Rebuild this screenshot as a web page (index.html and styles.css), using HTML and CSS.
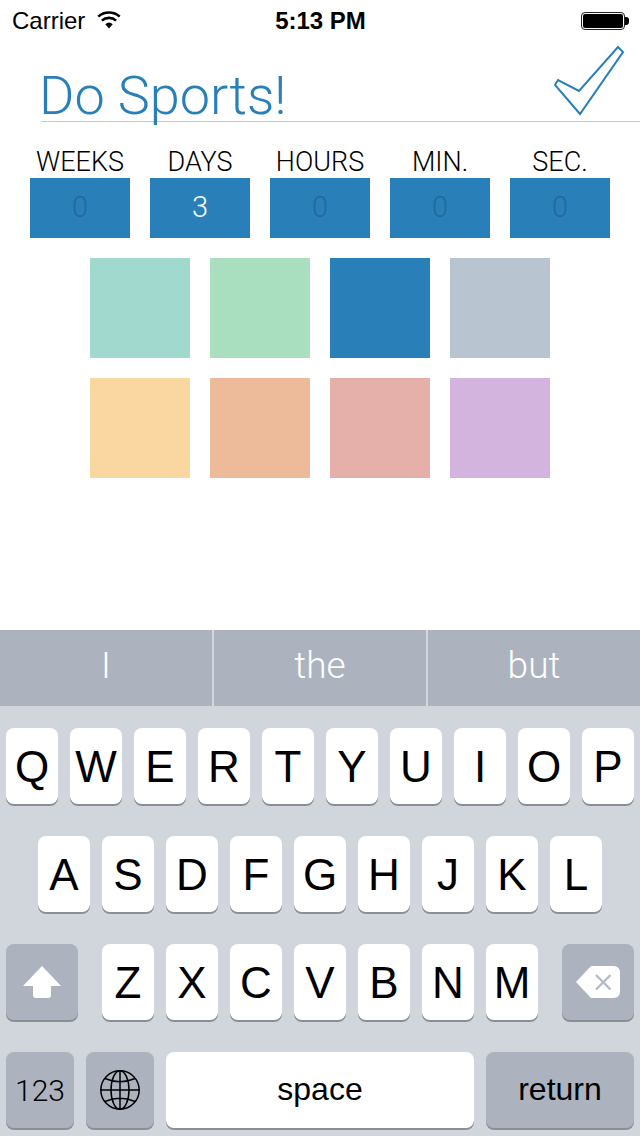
FILE: index.html
```html
<!DOCTYPE html>
<html lang="en">
<head>
<meta charset="utf-8">
<title>Do Sports!</title>
<link rel="stylesheet" href="styles.css">
</head>
<body>
<div class="screen">
  <div class="status">
    <div class="status-left">
      <span>Carrier</span>
      <svg class="wifi" width="26" height="20" viewBox="0 0 26 20"><path d="M13 17.500 9.300 13.200a5.600 5.600 0 0 1 7.400 0Z" fill="#000"/><path d="M5.900 9.600a10.600 10.600 0 0 1 14.200 0M2.300 5.600a16 16 0 0 1 21.400 0" fill="none" stroke="#000" stroke-width="2.600"/></svg>
    </div>
    <div class="status-time">5:13 PM</div>
    <div class="status-right">
      <span class="battery"><span class="battery-fill"></span></span><span class="battery-tip"></span>
    </div>
  </div>
  <div class="header">
    <div class="title">Do Sports!</div>
    <svg class="check" width="72" height="72" viewBox="0 0 72 72"><path d="M1 40 4 35 25 46 64 2 69 7 26 69Z" fill="none" stroke="#2980b9" stroke-width="2"/></svg>
  </div>
  <div class="units">
    <div class="unit"><div class="unit-label">WEEKS</div><div class="unit-box zero">0</div></div>
    <div class="unit"><div class="unit-label">DAYS</div><div class="unit-box">3</div></div>
    <div class="unit"><div class="unit-label">HOURS</div><div class="unit-box zero">0</div></div>
    <div class="unit"><div class="unit-label">MIN.</div><div class="unit-box zero">0</div></div>
    <div class="unit"><div class="unit-label">SEC.</div><div class="unit-box zero">0</div></div>
  </div>
  <div class="swatches">
    <div class="swatch c1"></div><div class="swatch c2"></div><div class="swatch c3"></div><div class="swatch c4"></div>
    <div class="swatch c5"></div><div class="swatch c6"></div><div class="swatch c7"></div><div class="swatch c8"></div>
  </div>
  <div class="keyboard">
    <div class="suggest">
      <div class="sug">I</div><div class="sug">the</div><div class="sug">but</div>
    </div>
    <div class="keys">
      <div class="row">
        <div class="key">Q</div><div class="key">W</div><div class="key">E</div><div class="key">R</div><div class="key">T</div><div class="key">Y</div><div class="key">U</div><div class="key">I</div><div class="key">O</div><div class="key">P</div>
      </div>
      <div class="row">
        <div class="key">A</div><div class="key">S</div><div class="key">D</div><div class="key">F</div><div class="key">G</div><div class="key">H</div><div class="key">J</div><div class="key">K</div><div class="key">L</div>
      </div>
      <div class="row row3">
        <div class="key fn wide">
          <svg width="38" height="32" viewBox="0 0 38 32"><path d="M19 0 38 20H28V29a3 3 0 0 1-3 3H13a3 3 0 0 1-3-3V20H0Z" fill="#fff"/></svg>
        </div>
        <div class="letters">
          <div class="key">Z</div><div class="key">X</div><div class="key">C</div><div class="key">V</div><div class="key">B</div><div class="key">N</div><div class="key">M</div>
        </div>
        <div class="key fn wide">
          <svg width="44" height="32" viewBox="0 0 44 32"><path d="M15 0H38a6 6 0 0 1 6 6V26a6 6 0 0 1-6 6H15L0 16Z" fill="#fff"/><path d="M20 9 34.500 23.500M34.500 9 20 23.500" stroke="#b4bcc8" stroke-width="2.400" fill="none"/></svg>
        </div>
      </div>
      <div class="row row4">
        <div class="key fn small num">123</div>
        <div class="key fn small">
          <svg width="40" height="40" viewBox="0 0 40 40" fill="none" stroke="#000" stroke-width="1.500"><circle cx="20" cy="20" r="19.200"/><ellipse cx="20" cy="20" rx="9" ry="19.200"/><path d="M20 1V39M1 20H39M5 8.500Q20 15 35 8.500M5 31.500Q20 25 35 31.500"/></svg>
        </div>
        <div class="key space">space</div>
        <div class="key fn return">return</div>
      </div>
    </div>
  </div>
</div>
</body>
</html>
```
FILE: styles.css
```css
* { box-sizing: border-box; }
html, body { margin: 0; padding: 0; background: #fff; }
.screen {
  width: 640px;
  height: 1136px;
  display: flex;
  flex-direction: column;
  overflow: hidden;
  font-family: "Liberation Sans", Arial, sans-serif;
  color: #000;
}
.status {
  height: 40px;
  padding: 2px 11px 0 12px;
  display: grid;
  grid-template-columns: 1fr auto 1fr;
  align-items: center;
  font-size: 24px;
}
.status-left { display: flex; align-items: center; gap: 11px; }
.wifi { margin-top: 0; }
.status-time { font-weight: 700; font-size: 24px; }
.status-right { display: flex; align-items: center; justify-content: flex-end; }
.battery {
  width: 44px;
  height: 18px;
  border: 1px solid #222;
  border-radius: 4px;
  padding: 1px;
  display: block;
}
.battery-fill { display: block; height: 100%; background: #000; border-radius: 2px; }
.battery-tip { width: 4px; height: 8px; background: #000; border-radius: 0 3px 3px 0; }
.header {
  height: 82px;
  margin-left: 41px;
  padding-right: 14px;
  border-bottom: 1px solid #c8c8c8;
  display: flex;
  justify-content: space-between;
  align-items: flex-end;
}
.title {
  font-family: Roboto, sans-serif;
  font-weight: 300;
  font-size: 54px;
  line-height: 60px;
  color: #2980b9;
  white-space: nowrap;
  margin: 0 0 -5px -2px;
}
.check { margin-bottom: 4px; }
.units {
  margin-top: 24px;
  padding: 0 30px;
  display: flex;
  justify-content: space-between;
}
.unit { width: 100px; }
.unit-label {
  font-family: Roboto, sans-serif;
  font-weight: 300;
  font-size: 27px;
  line-height: 32px;
  text-align: center;
  white-space: nowrap;
}
.unit-box {
  height: 60px;
  background: #2980b9;
  color: #fff;
  font-family: Roboto, sans-serif;
  font-weight: 300;
  font-size: 29px;
  padding-bottom: 2px;
  display: flex;
  align-items: center;
  justify-content: center;
}
.unit-box.zero { color: #206a9e; }
.swatches {
  margin-top: 20px;
  padding: 0 90px;
  display: grid;
  grid-template-columns: repeat(4, 100px);
  gap: 20px;
}
.swatch { height: 100px; }
.c1 { background: #a2d9ce; }
.c2 { background: #a9dfbf; }
.c3 { background: #2980b9; }
.c4 { background: #b8c4d0; }
.c5 { background: #fad7a0; }
.c6 { background: #edbb99; }
.c7 { background: #e6b0aa; }
.c8 { background: #d2b4de; }
.keyboard {
  margin-top: auto;
  height: 506px;
  background: #d1d5dc;
}
.suggest {
  height: 76px;
  display: flex;
  background: #acb3bf;
}
.sug {
  width: 214px;
  flex: none;
  color: #fff;
  font-family: Roboto, sans-serif;
  font-weight: 300;
  font-size: 37px;
  padding-bottom: 5px;
  display: flex;
  align-items: center;
  justify-content: center;
  border-right: 2px solid #d1d5dc;
}
.sug:last-child { flex: 1; border-right: 0; }
.keys {
  padding: 22px 6px 0;
  display: flex;
  flex-direction: column;
  gap: 32px;
}
.row { display: flex; justify-content: center; gap: 12px; }
.row3 { justify-content: space-between; }
.letters { display: flex; gap: 12px; }
.row4 { justify-content: flex-start; }
.key {
  width: 52px;
  height: 76px;
  flex: none;
  background: #fff;
  border-radius: 8px;
  box-shadow: 0 2px 0 #8b8e93;
  font-size: 44px;
  padding-top: 2px;
  display: flex;
  align-items: center;
  justify-content: center;
}
.fn { background: #acb3bf; padding-top: 0; }
.wide { width: 72px; }
.small { width: 68px; }
.num { font-family: Roboto, sans-serif; font-weight: 300; font-size: 30px; }
.space { width: 308px; font-size: 32px; padding-top: 0; padding-bottom: 2px; }
.return { width: 148px; font-size: 32px; padding-bottom: 2px; }
```
